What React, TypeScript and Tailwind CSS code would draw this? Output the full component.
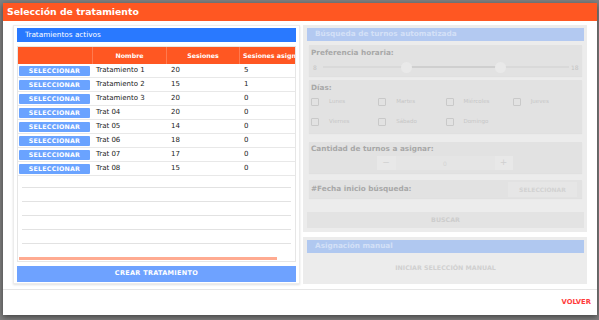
const rows = [
    { nombre: "Tratamiento 1", sesiones: 20, asignadas: 5 },
    { nombre: "Tratamiento 2", sesiones: 15, asignadas: 1 },
    { nombre: "Tratamiento 3", sesiones: 20, asignadas: 0 },
    { nombre: "Trat 04", sesiones: 20, asignadas: 0 },
    { nombre: "Trat 05", sesiones: 14, asignadas: 0 },
    { nombre: "Trat 06", sesiones: 18, asignadas: 0 },
    { nombre: "Trat 07", sesiones: 17, asignadas: 0 },
    { nombre: "Trat 08", sesiones: 15, asignadas: 0 },
];

const dias = ["Lunes", "Martes", "Miércoles", "Jueves", "Viernes", "Sábado", "Domingo"];

const App = () => {
    return (
        <div className="w-[599px] h-[320px] bg-[#808080] pt-[3px] pl-[3px] pr-[2px] pb-[5px] font-['DejaVu_Sans',sans-serif] overflow-hidden">
            <div className="w-full h-full bg-white flex flex-col shadow-[0_2px_6px_rgba(0,0,0,0.5)]">
                <div className="h-[18px] bg-[#ff5722] text-white font-bold text-[9.3px] px-[4px] flex items-center">
                    Selección de tratamiento
                </div>

                <div className="flex gap-[3px] pl-[10px] pt-[4px]">
                    {/* left card */}
                    <div className="w-[287px] h-[259px] border border-[#ececec] shadow-[0_1px_2px_rgba(0,0,0,0.12)] px-[3px] flex flex-col">
                        <div className="mt-[2px] h-[14px] bg-[#2979ff] text-white text-[7.3px] pl-[8px] flex items-center">
                            Tratamientos activos
                        </div>
                        <div className="mt-[4px] h-[216px] border border-[#e6e6e6] overflow-hidden flex flex-col">
                            <div className="w-[302px]">
                                <div className="h-[17px] bg-[#ff5722] text-white font-bold text-[6.3px] flex">
                                    <div className="w-[75px] border-r border-[#ff7a4f]" />
                                    <div className="w-[74px] border-r border-[#ff7a4f] flex items-center justify-center">Nombre</div>
                                    <div className="w-[73px] border-r border-[#ff7a4f] flex items-center justify-center">Sesiones</div>
                                    <div className="w-[80px] flex items-center pl-[3px] whitespace-nowrap">Sesiones asignadas</div>
                                </div>
                                {rows.map((r) => (
                                    <div key={r.nombre} className="h-[14px] border-b border-[#e8e8e8] flex items-center text-[7px] text-[#222]">
                                        <div className="w-[75px] pl-[1px]">
                                            <div className="w-[71px] h-[10px] bg-[#6aa3ff] rounded-[1px] text-white font-bold text-[6.3px] tracking-[0.2px] flex items-center justify-center">
                                                SELECCIONAR
                                            </div>
                                        </div>
                                        <div className="w-[74px] pl-[3px]">{r.nombre}</div>
                                        <div className="w-[73px] pl-[4px]">{r.sesiones}</div>
                                        <div className="w-[80px] pl-[4px]">{r.asignadas}</div>
                                    </div>
                                ))}
                            </div>
                            <div className="mt-[11px] flex flex-col">
                                {[0, 1, 2, 3, 4].map((i) => (
                                    <div key={i} className="h-[14px] mx-[4px] border-t border-[#e2e2e2]" />
                                ))}
                            </div>
                            <div className="mt-auto mb-[1px] ml-[1px] w-[258px] h-[3px] bg-[#ffab91]" />
                        </div>
                        <div className="mt-[4px] h-[16px] bg-[#6ea2ff] text-white font-bold text-[6.5px] tracking-[0.3px] flex items-center justify-center">
                            CREAR TRATAMIENTO
                        </div>
                    </div>

                    {/* right column */}
                    <div className="w-[284px] flex flex-col gap-[5px]">
                        <div className="h-[207px] bg-[#ececec] pl-[4px] pr-[3px] pt-[3px] flex flex-col">
                            <div className="h-[13px] bg-[#b3c9f1] text-[#d3e0f7] font-bold text-[7.3px] pl-[8px] flex items-center">
                                Búsqueda de turnos automatizada
                            </div>

                            <div className="mt-[4px] mx-[2px] h-[31px] bg-[#e2e2e2] shadow-[0_1px_1px_rgba(0,0,0,0.05)] px-[2px] pt-[3px]">
                                <div className="text-[7.3px] font-bold text-[#a8a8a8] leading-[10px]">Preferencia horaria:</div>
                                <div className="mt-[3px] flex items-center text-[6px] text-[#c4c4c4]">
                                    <span className="w-[12px] pl-[2px]">8</span>
                                    <div className="relative w-[246px] h-[12px] flex items-center">
                                        <div className="w-full h-[2px] bg-[#d9d9d9]" />
                                        <div className="absolute left-[83px] w-[94px] h-[2px] bg-[#cfcfcf]" />
                                        <div className="absolute left-[78px] w-[11px] h-[11px] rounded-full bg-[#e9e9e9]" />
                                        <div className="absolute left-[172px] w-[11px] h-[11px] rounded-full bg-[#e9e9e9]" />
                                    </div>
                                    <span className="pl-[2px]">18</span>
                                </div>
                            </div>

                            <div className="mt-[4px] mx-[2px] h-[53px] bg-[#e2e2e2] shadow-[0_1px_1px_rgba(0,0,0,0.05)] px-[2px] pt-[3px]">
                                <div className="text-[7.3px] font-bold text-[#a8a8a8] leading-[10px]">Días:</div>
                                <div className="mt-[4px] grid grid-cols-4 gap-y-[11px]">
                                    {dias.map((d) => (
                                        <div key={d} className="flex items-center h-[9px]">
                                            <div className="w-[8px] h-[8px] border border-[#c9c9c9] rounded-[1px]" />
                                            <span className="ml-[10px] text-[5.5px] text-[#c6c6c6]">{d}</span>
                                        </div>
                                    ))}
                                </div>
                            </div>

                            <div className="mt-[9px] mx-[2px] h-[31px] bg-[#e2e2e2] shadow-[0_1px_1px_rgba(0,0,0,0.05)] px-[2px] pt-[2px]">
                                <div className="text-[7.3px] font-bold text-[#a8a8a8] leading-[10px]">Cantidad de turnos a asignar:</div>
                                <div className="mt-[2px] flex justify-center">
                                    <div className="flex h-[14px] ml-[-2px] text-[#d0d0d0]">
                                        <div className="w-[19px] bg-[#e8e8e8] flex items-center justify-center text-[9px]">−</div>
                                        <div className="w-[99px] bg-[#e5e5e5] flex items-center justify-center text-[6px] text-[#d4d4d4]">0</div>
                                        <div className="w-[18px] bg-[#e8e8e8] flex items-center justify-center text-[9px]">+</div>
                                    </div>
                                </div>
                            </div>

                            <div className="mt-[7px] mx-[2px] h-[18px] bg-[#e2e2e2] shadow-[0_1px_1px_rgba(0,0,0,0.05)] pl-[2px] pr-[5px] flex items-center justify-between">
                                <div className="text-[7.3px] font-bold text-[#a8a8a8]">#Fecha inicio búsqueda:</div>
                                <div className="w-[69px] h-[15px] bg-[#e6e6e6] text-[#d2d2d2] font-bold text-[6px] flex items-center justify-center">
                                    SELECCIONAR
                                </div>
                            </div>

                            <div className="mt-[14px] h-[16px] bg-[#e3e3e3] text-[#cdcdcd] font-bold text-[6.3px] flex items-center justify-center">
                                BUSCAR
                            </div>
                        </div>

                        <div className="h-[47px] bg-[#ececec] pl-[4px] pr-[3px] pt-[3px] flex flex-col">
                            <div className="h-[13px] bg-[#b0c8f0] text-[#d3e0f7] font-bold text-[7.3px] pl-[8px] flex items-center">
                                Asignación manual
                            </div>
                            <div className="flex-1 flex items-center justify-center text-[#d0d0d0] font-bold text-[6.3px] pb-[2px]">
                                INICIAR SELECCIÓN MANUAL
                            </div>
                        </div>
                    </div>
                </div>

                <div className="mt-[5px] border-t border-[#e6e6e6] flex-1 flex items-center justify-end pr-[6px]">
                    <span className="text-[#ff3b3b] font-bold text-[6.8px]">VOLVER</span>
                </div>
            </div>
        </div>
    );
};

export default App;
